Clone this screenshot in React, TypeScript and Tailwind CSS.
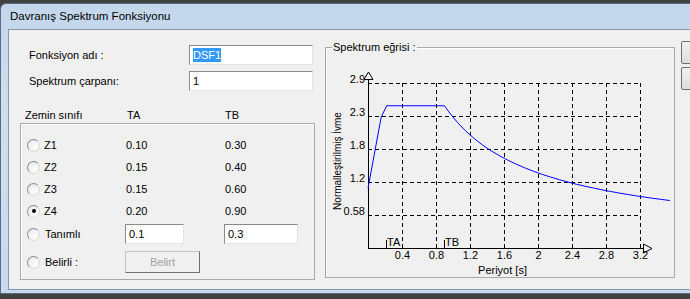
import React from 'react';

const TA = 0.2;
const TB = 0.9;
const px = (t: number) => 373 + 85 * t;
const py = (s: number) => 248 - 56.9 * s;

function spectrum(t: number) {
  if (t < TA) return 1 + 1.5 * (t / TA);
  if (t <= TB) return 2.5;
  return 2.5 * Math.pow(TB / t, 0.8);
}

function curvePoints() {
  const pts: string[] = [];
  pts.push(`${px(0)},${py(1.05)}`);
  pts.push(`${px(0.155)},${py(2.3)}`);
  pts.push(`${px(0.22)},${py(2.5)}`);
  pts.push(`${px(TB)},${py(2.5)}`);
  for (let t = TB + 0.05; t <= 3.62; t += 0.1) {
    pts.push(`${px(t).toFixed(1)},${py(spectrum(t)).toFixed(1)}`);
  }
  return pts.join(' ');
}

const rows = [
  { name: 'Z1', ta: '0.10', tb: '0.30' },
  { name: 'Z2', ta: '0.15', tb: '0.40' },
  { name: 'Z3', ta: '0.15', tb: '0.60' },
  { name: 'Z4', ta: '0.20', tb: '0.90', checked: true },
];

function Radio({ checked }: { checked?: boolean }) {
  return (
    <span className="flex h-[13px] w-[13px] items-center justify-center rounded-full border border-[#8c8c8c] border-b-[#dadada] border-r-[#dadada] bg-[radial-gradient(circle_at_65%_65%,#ffffff,#e4e4e4)]">
      {checked && <span className="h-[4px] w-[4px] rounded-full bg-black" />}
    </span>
  );
}

function TextBox({ value, width, selected }: { value: string; width: string; selected?: boolean }) {
  return (
    <div className={`flex h-[20px] ${width} items-center border border-[#8a8a8a] border-b-[#e3e3e3] border-r-[#e3e3e3] bg-white pl-[3px]`}>
      {selected ? <span className="bg-[#3399ff] leading-[14px] text-white">{value}</span> : <span>{value}</span>}
    </div>
  );
}

function Chart() {
  const vx = [1, 2, 3, 4, 5, 6, 7, 8].map((i) => 373 + 34 * i);
  const hy = [83, 116, 149, 182, 215];
  const xl = ['0.4', '0.8', '1.2', '1.6', '2', '2.4', '2.8', '3.2'];
  const yl = ['2.9', '2.3', '1.8', '1.2', '0.58'];
  return (
    <svg width={348} height={229} viewBox="331 48 348 229" className="block" style={{ fontFamily: '"Liberation Sans", Arial, sans-serif' }}>
      <g stroke="#000" strokeWidth={1} strokeDasharray="4 3" shapeRendering="crispEdges">
        {hy.map((y) => (
          <line key={y} x1={373} y1={y + 0.5} x2={645.5} y2={y + 0.5} />
        ))}
        {vx.map((x) => (
          <line key={x} x1={x + 0.5} y1={83} x2={x + 0.5} y2={248} />
        ))}
      </g>
      <g stroke="#000" strokeWidth={1} shapeRendering="crispEdges">
        <line x1={373.5} y1={79} x2={373.5} y2={249} />
        <line x1={373} y1={248.5} x2={649} y2={248.5} />
        <line x1={391.5} y1={240} x2={391.5} y2={248} />
        <line x1={449.5} y1={240} x2={449.5} y2={248} />
      </g>
      <polygon points="373.5,72 369,79.5 378,79.5" fill="none" stroke="#000" strokeWidth={1} />
      <polygon points="657,248.5 648.5,244 648.5,253" fill="none" stroke="#000" strokeWidth={1} />
      <polyline points={curvePoints()} fill="none" stroke="#0000ff" strokeWidth={1} />
      <g fontSize={11} fill="#000">
        {yl.map((l, i) => (
          <text key={l} x={370} y={hy[i]} textAnchor="end">
            {l}
          </text>
        ))}
        {xl.map((l, i) => (
          <text key={l} x={vx[i] + 0.5} y={259} textAnchor="middle">
            {l}
          </text>
        ))}
        <text x={392} y={246}>TA</text>
        <text x={450} y={246}>TB</text>
        <text x={507.5} y={274} textAnchor="middle">
          Periyot [s]
        </text>
      </g>
      <text fontSize={10} fill="#000" textAnchor="middle" transform="translate(346 161) rotate(-90)">
        Normalleştirilmiş İvme
      </text>
    </svg>
  );
}

export default function App() {
  return (
    <div className="flex h-[299px] w-[690px] flex-col overflow-hidden bg-[#414141] pt-[3px] font-['Liberation_Sans',Arial,sans-serif] text-[11px] text-black">
      <div className="flex h-[291px] w-[730px] flex-col rounded-t-[6px] border border-[#5d6b7e] bg-[linear-gradient(180deg,#c3d6ec_0%,#cfdff1_40%,#c6d9ee_100%)] pl-[7px]">
        <div className="flex h-[25px] items-center pl-[2px] text-[11.5px] text-black">Davranış Spektrum Fonksiyonu</div>

        <div className="mr-[7px] flex h-[261px] border border-[#8797ac] bg-[#f0f0f0]">
          <div className="flex w-[311px] flex-col pl-[11px] pt-[15px]">
            <div className="ml-[9px] flex h-[20px] items-center">
              <span className="w-[160px]">Fonksiyon adı :</span>
              <TextBox value="DSF1" width="w-[124px]" selected />
            </div>
            <div className="ml-[9px] mt-[6px] flex h-[20px] items-center">
              <span className="w-[160px]">Spektrum çarpanı:</span>
              <TextBox value="1" width="w-[124px]" />
            </div>

            <div className="ml-[5px] mt-[17px] flex h-[14px] items-center">
              <span className="w-[102px]">Zemin sınıfı</span>
              <span className="w-[98px]">TA</span>
              <span>TB</span>
            </div>

            <div className="mt-[1px] flex h-[157px] w-[295px] flex-col border border-[#a9a9a9] pl-[6px] pt-[10px] shadow-[inset_1px_1px_0_#ffffff]">
              {rows.map((r) => (
                <div key={r.name} className="flex h-[22px] items-center">
                  <div className="flex w-[98px] items-center gap-[4px]">
                    <Radio checked={r.checked} />
                    <span>{r.name}</span>
                  </div>
                  <span className="w-[99px] pl-[1px]">{r.ta}</span>
                  <span className="pl-[1px]">{r.tb}</span>
                </div>
              ))}
              <div className="flex h-[24px] items-center">
                <div className="flex w-[98px] items-center gap-[4px]">
                  <Radio />
                  <span className="pl-[1px]">Tanımlı</span>
                </div>
                <div className="w-[99px]">
                  <TextBox value="0.1" width="w-[59px]" />
                </div>
                <TextBox value="0.3" width="w-[74px]" />
              </div>
              <div className="mt-[5px] flex h-[22px] items-center">
                <div className="flex w-[98px] items-center gap-[4px]">
                  <Radio />
                  <span className="pl-[1px]">Belirli :</span>
                </div>
                <div className="flex h-[22px] w-[75px] items-center justify-center border border-[#c4c4c4] border-b-[#707070] border-r-[#707070] bg-[#f0f0f0] text-[#a0a0a0]">
                  Belirt
                </div>
              </div>
            </div>
          </div>

          <div className="relative ml-[10px] mt-[17px] h-[231px] w-[350px] border border-[#a9a9a9] shadow-[inset_1px_1px_0_#ffffff]">
            <span className="absolute -top-[8px] left-[6px] bg-[#f0f0f0] px-[1px] leading-[14px]">Spektrum eğrisi :</span>
            <Chart />
          </div>

          <div className="ml-[6px] mt-[11px] flex flex-col gap-[3px]">
            <div className="h-[23px] w-[75px] rounded-[2px] border border-[#707070] bg-[linear-gradient(180deg,#f2f2f2,#dcdcdc)]" />
            <div className="h-[23px] w-[75px] rounded-[2px] border border-[#707070] bg-[linear-gradient(180deg,#f2f2f2,#dcdcdc)]" />
          </div>
        </div>
      </div>
    </div>
  );
}
